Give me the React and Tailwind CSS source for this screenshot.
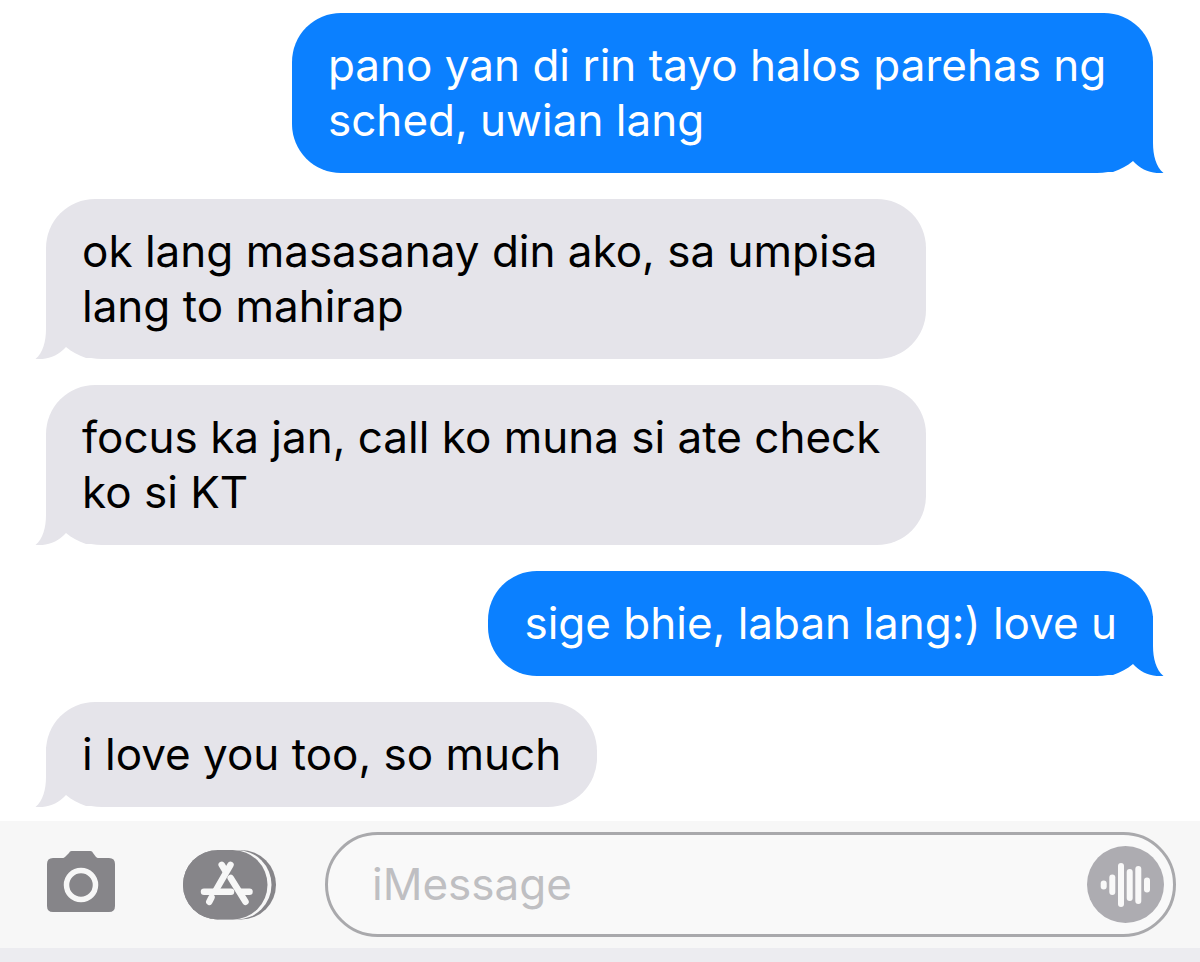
import React, { useState } from "react";
import clsx from "clsx";

const messages = [
  { id: 1, mine: true, text: "pano yan di rin tayo halos parehas ng sched, uwian lang" },
  { id: 2, mine: false, text: "ok lang masasanay din ako, sa umpisa lang to mahirap" },
  { id: 3, mine: false, text: "focus ka jan, call ko muna si ate check ko si KT" },
  { id: 4, mine: true, text: "sige bhie, laban lang:) love u" },
  { id: 5, mine: false, text: "i love you too, so much" },
];

// Drawn for the right side, mirrored for incoming bubbles
const Tail = ({ mine }) => (
  <svg
    className={clsx(
      "absolute bottom-0 h-[60px] w-[60px]",
      mine ? "-right-[11px] text-[#0b80ff]" : "-left-[11px] -scale-x-100 text-[#e5e4ea]"
    )}
    viewBox="0 0 60 60"
    fill="currentColor"
    aria-hidden="true"
  >
    <path d="M0 0H49V30C49 42 52 54 59.5 60C48 61 37 57 29 48C23 53 17 56 9 59H0Z" />
  </svg>
);

const Bubble = ({ mine, text }) => (
  <li
    className={clsx(
      "relative w-fit rounded-[49px] px-9 py-[25px] text-[44px] leading-[55px]",
      mine
        ? "max-w-[861px] self-end rounded-br-[56px] bg-[#0b80ff] text-white"
        : "max-w-[880px] self-start rounded-bl-[56px] bg-[#e5e4ea] text-black"
    )}
  >
    <Tail mine={mine} />
    <p className="relative">{text}</p>
  </li>
);

const CameraIcon = () => (
  <svg className="h-[68px] w-[68px]" viewBox="0 0 68 68" aria-hidden="true">
    <path
      fill="#868589"
      d="M6 7H14C16 7 17 7 18 6L22 2C23 0 24 0 26 0H42C44 0 45 0 46 2L49 6C50 7 51 7 53 7H62Q68 7 68 13V55Q68 61 62 61H6Q0 61 0 55V13Q0 7 6 7Z"
    />
    <circle cx="34" cy="34" r="14.5" fill="none" stroke="#f7f7f7" strokeWidth="5.5" />
  </svg>
);

const AppsIcon = () => (
  <svg className="h-[70px] w-[94px]" viewBox="0 0 94 70" aria-hidden="true">
    <rect width="93" height="69.5" rx="34.7" fill="#868589" />
    <rect x="2" width="86.5" height="69.5" rx="34.7" fill="#f7f7f7" />
    <rect width="84.5" height="69.5" rx="34.7" fill="#868589" />
    <g fill="none" stroke="#f7f7f7" strokeWidth="6.5" strokeLinecap="round">
      <path d="M47.5 14.8L33 40" />
      <path d="M38.7 14.8L42.5 21" />
      <path d="M21 41.7H48" />
      <path d="M58 41.7H66.5" />
      <path d="M47.7 28L62.5 51.8" />
      <path d="M28.5 47.5L26.3 51.8" />
    </g>
  </svg>
);

const AudioIcon = () => (
  <svg className="h-[77px] w-[77px]" viewBox="0 0 77 77" aria-hidden="true">
    <circle cx="38.5" cy="38.5" r="38.5" fill="#adacb1" />
    <g fill="#f9f9f9">
      <rect x="13.7" y="34.5" width="6" height="9" rx="3" />
      <rect x="22.3" y="28.5" width="6" height="20.5" rx="3" />
      <rect x="31" y="17" width="6" height="44" rx="3" />
      <rect x="39.7" y="23" width="6" height="32" rx="3" />
      <rect x="48.3" y="20" width="6" height="38" rx="3" />
      <rect x="57" y="31.5" width="6" height="15" rx="3" />
    </g>
  </svg>
);

const App = () => {
  const [draft, setDraft] = useState("");

  return (
    <div className="flex min-h-screen flex-col bg-white font-['Inter','Liberation_Sans',sans-serif]">
      {/* Conversation */}
      <main className="flex-1 pt-[13px] pr-[47px] pb-[14px] pl-[46px]">
        <ul className="flex flex-col gap-[26px]">
          {messages.map((message) => (
            <Bubble key={message.id} mine={message.mine} text={message.text} />
          ))}
        </ul>
      </main>

      {/* Composer */}
      <footer className="border-b-[14px] border-[#ececf0] bg-[#f7f7f7]">
        <form
          className="flex items-center pt-[11px] pr-6 pb-[11px] pl-[47px]"
          onSubmit={(e) => e.preventDefault()}
        >
          <button type="button" aria-label="Camera" className="shrink-0">
            <CameraIcon />
          </button>
          <button type="button" aria-label="Apps" className="ml-[68px] shrink-0">
            <AppsIcon />
          </button>
          <div className="ml-12 flex h-[105px] min-w-0 flex-1 items-center rounded-full border-3 border-[#a9a9ac] bg-[#f9f9f9] pr-[9px] pl-[44px]">
            <input
              type="text"
              aria-label="Message"
              placeholder="iMessage"
              value={draft}
              onChange={(e) => setDraft(e.target.value)}
              className="min-w-0 flex-1 bg-transparent text-[44px] leading-[55px] outline-none placeholder:text-[#bfbfc2]"
            />
            <button type="button" aria-label="Record audio" className="shrink-0">
              <AudioIcon />
            </button>
          </div>
        </form>
      </footer>
    </div>
  );
};

export default App;
